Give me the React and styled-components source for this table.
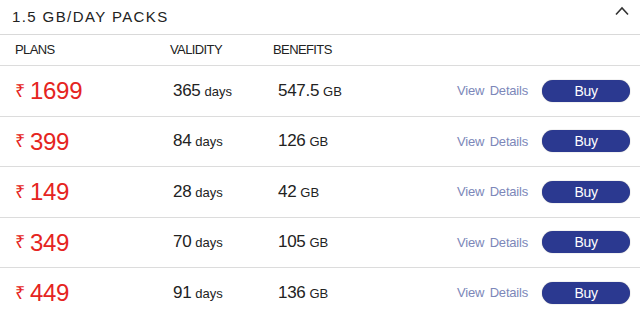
import React from 'react';
import styled, { createGlobalStyle } from 'styled-components';

const GlobalStyle = createGlobalStyle`
    html, body {
        margin: 0;
        padding: 0;
        background: #fff;
        font-family: "Liberation Sans", Arial, sans-serif;
        color: #222;
    }
`;

const Panel = styled.div`
    width: 640px;
    height: 318px;
    overflow: hidden;
    background: #fff;
`;

const TitleBar = styled.div`
    height: 35px;
    display: flex;
    align-items: center;
    justify-content: space-between;
    padding: 0 12px 0 12px;
    border-bottom: 1px solid #d9d9d9;
    box-sizing: border-box;
`;

const Title = styled.h2`
    margin: 0;
    font-size: 15px;
    font-weight: 400;
    letter-spacing: 1.4px;
    color: #222;
    padding-bottom: 1px;
`;

const Chevron = styled.svg`
    width: 14px;
    height: 10px;
    margin-right: -1px;
    margin-bottom: 12px;
`;

const Row = styled.div`
    display: grid;
    grid-template-columns: 155px 103px 1fr 220px;
    align-items: center;
    padding-left: 15px;
    height: ${p => p.$h}px;
    border-bottom: 1px solid #dcdcdc;
    box-sizing: border-box;
`;

const HeadCell = styled.div`
    font-size: 13px;
    letter-spacing: -0.6px;
    color: #222;
    padding-bottom: 2px;
`;

const Price = styled.div`
    color: #e52421;
    display: flex;
    align-items: center;
    gap: 5px;
    padding-top: 1px;
`;

const Rupee = styled.span`
    font-size: 18px;
    margin-top: -3px;
`;

const Amount = styled.span`
    font-size: 24px;
    letter-spacing: -0.3px;
`;

const Value = styled.div`
    padding-left: ${p => p.$offset}px;
    font-size: 17px;
    letter-spacing: -0.3px;
    color: #222;
`;

const Unit = styled.span`
    font-size: 13px;
    margin-left: 4px;
    letter-spacing: 0;
`;

const Actions = styled.div`
    display: flex;
    align-items: center;
    justify-content: flex-end;
    padding-right: 10px;
`;

const ViewLink = styled.a`
    font-size: 13px;
    color: #7c87b9;
    text-decoration: none;
    white-space: nowrap;
    word-spacing: 2px;
    margin-right: 14px;
    letter-spacing: -0.2px;
`;

const BuyButton = styled.button`
    width: 88px;
    height: 22px;
    border: none;
    border-radius: 11px;
    background: #2b3990;
    color: #fff;
    font-family: "Liberation Sans", Arial, sans-serif;
    font-size: 14px;
    letter-spacing: -0.3px;
    cursor: pointer;
    box-shadow: 0 0 1px rgba(0, 0, 0, 0.5);
`;

const packs = [
    { price: '1699', days: '365', data: '547.5' },
    { price: '399', days: '84', data: '126' },
    { price: '149', days: '28', data: '42' },
    { price: '349', days: '70', data: '105' },
    { price: '449', days: '91', data: '136' },
];

export default function App() {
    return (
        <Panel>
            <GlobalStyle />
            <TitleBar>
                <Title>1.5 GB/DAY PACKS</Title>
                <Chevron viewBox="0 0 14 10">
                    <path d="M1 8.5 L7 2 L13 8.5" fill="none" stroke="#333" strokeWidth="1.6" />
                </Chevron>
            </TitleBar>
            <Row $h={31}>
                <HeadCell>PLANS</HeadCell>
                <HeadCell>VALIDITY</HeadCell>
                <HeadCell>BENEFITS</HeadCell>
                <div />
            </Row>
            {packs.map(p => (
                <Row key={p.price} $h={50.5}>
                    <Price>
                        <Rupee>₹</Rupee>
                        <Amount>{p.price}</Amount>
                    </Price>
                    <Value $offset={3}>{p.days}<Unit>days</Unit></Value>
                    <Value $offset={5}>{p.data}<Unit>GB</Unit></Value>
                    <Actions>
                        <ViewLink href="#">View Details</ViewLink>
                        <BuyButton>Buy</BuyButton>
                    </Actions>
                </Row>
            ))}
        </Panel>
    );
}
